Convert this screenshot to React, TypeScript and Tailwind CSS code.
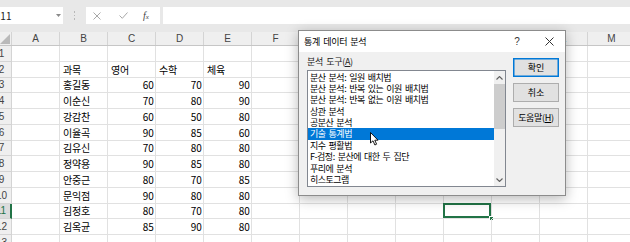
import React from "react";

const KR = "font-['Noto_Sans_CJK_KR',sans-serif]";

const columns = ["A", "B", "C", "D", "E", "F", "G", "H", "I", "J", "K", "L", "M"];

const sheet: Record<number, string[]> = {
  2: ["과목", "영어", "수학", "체육"],
  3: ["홍길동", "60", "70", "90"],
  4: ["이순신", "70", "80", "90"],
  5: ["강감찬", "60", "50", "80"],
  6: ["이율곡", "90", "85", "60"],
  7: ["김유신", "70", "80", "80"],
  8: ["정약용", "90", "85", "80"],
  9: ["안중근", "80", "70", "85"],
  10: ["문익점", "90", "80", "80"],
  11: ["김정호", "80", "70", "80"],
  12: ["김옥균", "85", "90", "80"],
};

const tools = [
  "분산 분석: 일원 배치법",
  "분산 분석: 반복 있는 이원 배치법",
  "분산 분석: 반복 없는 이원 배치법",
  "상관 분석",
  "공분산 분석",
  "기술 통계법",
  "지수 평활법",
  "F-검정: 분산에 대한 두 집단",
  "푸리에 분석",
  "히스토그램",
];

function FormulaBar() {
  return (
    <div className="h-[32px] bg-[#e8e8e8] pt-[7px]">
      <div className="flex h-[17px] items-stretch">
        <div className="relative flex w-[71px] items-center bg-white pl-[3px] text-[10px] text-[#222]">
          <span className={KR}>J11</span>
          <svg className="absolute left-[64px] top-[7px]" width="5" height="3" viewBox="0 0 5 3">
            <path d="M0 0 L5 0 L2.5 3 Z" fill="#8a8a8a" />
          </svg>
        </div>
        <div className="flex w-[23px] flex-col items-center justify-center gap-[2px]">
          <span className="h-[1.5px] w-[1.5px] bg-[#b8b8b8]" />
          <span className="h-[1.5px] w-[1.5px] bg-[#b8b8b8]" />
          <span className="h-[1.5px] w-[1.5px] bg-[#b8b8b8]" />
        </div>
        <div className="flex w-[74px] items-center bg-white">
          <svg className="ml-[7px]" width="8" height="8" viewBox="0 0 8 8">
            <path d="M0.5 0.5 L7.5 7.5 M7.5 0.5 L0.5 7.5" stroke="#a8a8a8" strokeWidth="1" />
          </svg>
          <svg className="ml-[18px]" width="9" height="7" viewBox="0 0 9 7">
            <path d="M0.5 3.5 L3.3 6.3 L8.5 0.5" stroke="#a8a8a8" strokeWidth="1" fill="none" />
          </svg>
          <span className="ml-[15px] font-['Liberation_Serif',serif] text-[10px] italic text-[#444]">
            f<span className="text-[7px]">x</span>
          </span>
        </div>
        <div className="ml-[3px] flex-1 bg-white" />
      </div>
    </div>
  );
}

function Sheet() {
  const rows = Array.from({ length: 13 }, (_, i) => i + 1);
  return (
    <div className={`${KR} text-[10px]`}>
      <div className="flex h-[14px] border-b border-[#c6c6c6] bg-[#efefef]">
        <div className="relative w-[20px] border-r border-[#d4d4d4]">
          <svg className="absolute right-[1px] bottom-[1px]" width="10" height="10" viewBox="0 0 10 10">
            <path d="M10 0 L10 10 L0 10 Z" fill="#b9b9b9" />
          </svg>
        </div>
        {columns.map((c) => (
          <div
            key={c}
            className="flex w-[48px] shrink-0 items-center justify-center border-r border-[#d4d4d4] font-['Liberation_Sans',sans-serif] text-[10px] text-[#444]"
          >
            {c}
          </div>
        ))}
      </div>
      {rows.map((r) => {
        const active = r === 11;
        return (
          <div key={r} className="flex h-[15.75px]">
            <div
              className={`flex w-[20px] shrink-0 items-center justify-center border-b font-['Liberation_Sans',sans-serif] text-[10px] ${
                active
                  ? "border-r-2 border-b-[#d4d4d4] border-r-[#217346] bg-[#dcdcdc] text-[#217346]"
                  : "border-r border-[#d4d4d4] bg-[#efefef] text-[#444]"
              }`}
            >
              {r}
            </div>
            {columns.map((c, ci) => {
              const data = sheet[r];
              const text = data && ci >= 1 && ci <= 4 ? data[ci - 1] : "";
              const numeric = /^\d+$/.test(text);
              return (
                <div
                  key={c}
                  className={`relative flex w-[48px] shrink-0 items-center border-r border-b border-[#e1e1e1] text-black ${
                    numeric ? "justify-end pr-[1.5px]" : "pl-[3px]"
                  }`}
                >
                  <span className="tracking-[-0.2px]">{text}</span>
                  {c === "J" && active && (
                    <>
                      <div className="absolute -top-px -left-px right-0 bottom-0 border-2 border-[#217346]" />
                      <div className="absolute -right-[3px] -bottom-[3px] h-[5px] w-[5px] border border-white bg-[#217346]" />
                    </>
                  )}
                </div>
              );
            })}
          </div>
        );
      })}
    </div>
  );
}

function Dialog() {
  return (
    <div
      className={`${KR} absolute left-[298px] top-[30px] flex h-[166px] w-[268px] flex-col border border-[#8c8c8c] bg-[#f0f0f0] text-[9px] text-black shadow-[0_3px_12px_rgba(0,0,0,0.28)] [word-spacing:1.5px]`}
    >
      <div className="flex h-[21px] items-center bg-white pl-[5px]">
        <span className="tracking-[-0.3px]">통계 데이터 분석</span>
        <div className="ml-auto flex h-full">
          <div className="flex w-[32px] items-center justify-center font-['Liberation_Sans',sans-serif] text-[10px] text-[#333]">
            ?
          </div>
          <div className="flex w-[32px] items-center justify-center">
            <svg width="9" height="9" viewBox="0 0 9 9">
              <path d="M0.5 0.5 L8.5 8.5 M8.5 0.5 L0.5 8.5" stroke="#333" strokeWidth="1" />
            </svg>
          </div>
        </div>
      </div>
      <div className="flex pl-[8px] pt-[4px]">
        <div className="flex flex-col">
          <div className="h-[12px] leading-[12px] tracking-[-0.3px] text-[#222]">
            분석 도구(<span className="underline">A</span>)
          </div>
          <div className="mt-[2px] flex h-[117px] w-[199px] border border-[#828790] bg-white">
            <div className="flex-1 pt-[0.5px]">
              {tools.map((t, i) => (
                <div
                  key={t}
                  className={`h-[11.4px] whitespace-nowrap pl-[2px] leading-[11.4px] tracking-[-0.5px] ${
                    i === 5 ? "bg-[#0078d7] text-white" : "text-black"
                  }`}
                >
                  {t}
                </div>
              ))}
            </div>
            <div className="flex w-[11px] flex-col bg-[#f0f0f0]">
              <div className="flex h-[13px] items-center justify-center">
                <svg width="7" height="4" viewBox="0 0 7 4">
                  <path d="M0.5 3.5 L3.5 0.5 L6.5 3.5" stroke="#606060" strokeWidth="1.1" fill="none" />
                </svg>
              </div>
              <div className="h-[45px] w-full bg-[#cdcdcd]" />
              <div className="flex-1" />
              <div className="flex h-[13px] items-center justify-center">
                <svg width="7" height="4" viewBox="0 0 7 4">
                  <path d="M0.5 0.5 L3.5 3.5 L6.5 0.5" stroke="#606060" strokeWidth="1.1" fill="none" />
                </svg>
              </div>
            </div>
          </div>
        </div>
        <div className="ml-[7px] flex flex-col gap-[6px] pt-[2px]">
          <button className="flex h-[19px] w-[46px] items-center justify-center border border-[#0078d7] bg-[#e1e1e1] shadow-[inset_0_0_0_0.5px_#0078d7]">
            확인
          </button>
          <button className="flex h-[19px] w-[46px] items-center justify-center border border-[#adadad] bg-[#e1e1e1]">
            취소
          </button>
          <button className="flex h-[19px] w-[46px] items-center justify-center border border-[#adadad] bg-[#e1e1e1] tracking-[-0.3px]">
            도움말(<span className="underline">H</span>)
          </button>
        </div>
      </div>
    </div>
  );
}

function Cursor() {
  return (
    <svg className="absolute left-[370px] top-[132px]" width="9" height="14" viewBox="0 0 9 14">
      <path
        d="M0.5 0.5 L0.5 11 L3 8.8 L4.9 13 L6.6 12.2 L4.8 8.2 L8 8.2 Z"
        fill="white"
        stroke="black"
        strokeWidth="0.9"
        strokeLinejoin="round"
      />
    </svg>
  );
}

export default function App() {
  return (
    <div className="relative h-[242px] w-[630px] overflow-hidden bg-white">
      <div className="-ml-[8px] w-[644px]">
        <FormulaBar />
        <Sheet />
      </div>
      <Dialog />
      <Cursor />
    </div>
  );
}
